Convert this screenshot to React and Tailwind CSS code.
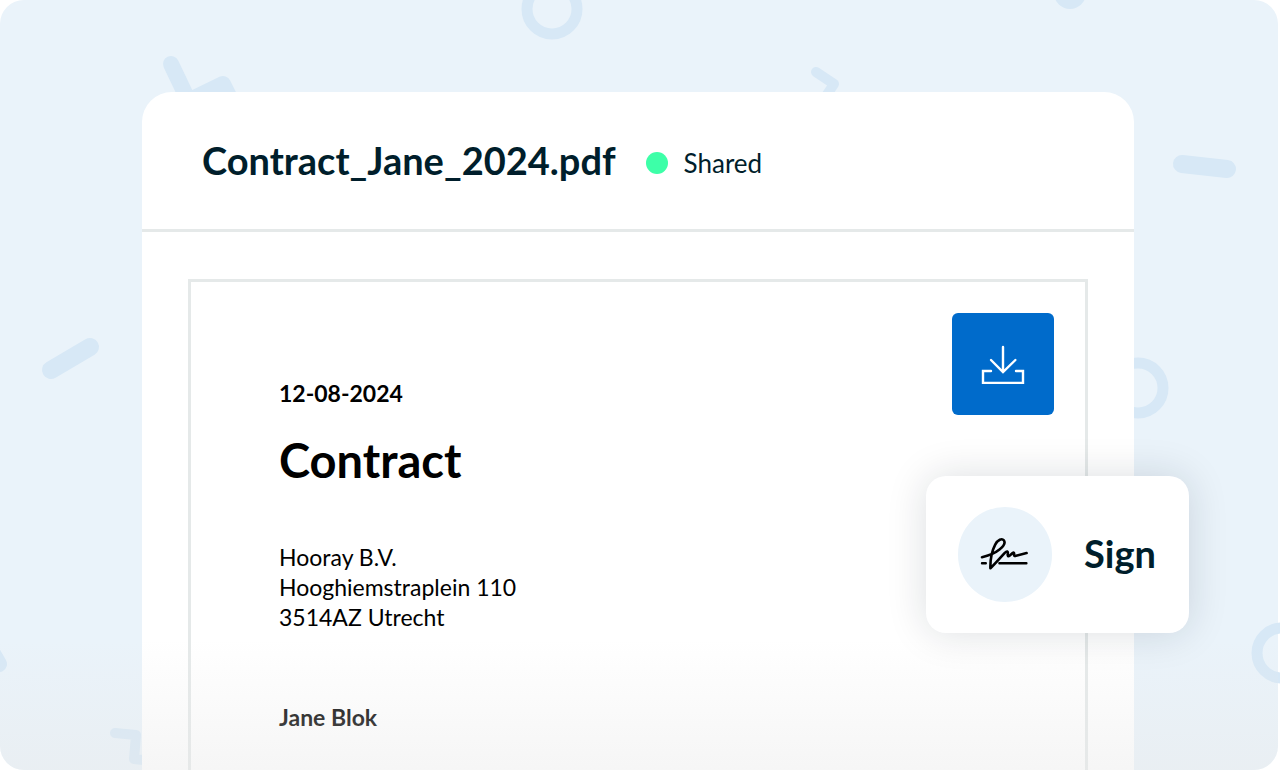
const SignatureIcon = () => (
    <svg width="50" height="36" viewBox="0 0 50 36" fill="none" stroke="black" strokeWidth="2.6" strokeLinecap="round" strokeLinejoin="round" aria-hidden="true">
        <path d="M2 20.2C8 19 14.5 16.6 19.5 12.6C23.5 9.3 25.5 5.5 23.8 3.3C22 1 17.8 2.6 15.2 7.6C12.4 13 10.2 23 10.4 31.2C14 28 19.6 21.5 24.8 15.8C27 13.6 28.2 14.4 27.8 16.6C27.4 19 28.2 19.8 29.8 18.4L32.6 16C33.8 15.2 34.4 16 34 17.4C33.8 19 34.6 19.2 36 18.8L46.6 16" />
        <path d="M2 26.2H5.8M19.4 26.2H46.4" strokeWidth="2.4" />
    </svg>
);

const DownloadIcon = () => (
    <svg width="44" height="40" viewBox="0 0 44 40" fill="none" stroke="white" strokeWidth="2.4" strokeLinecap="round" aria-hidden="true">
        <path d="M22 3V27M10 16L22 28L34.4 16" />
        <path d="M10 27H2V39H42V27H35" />
    </svg>
);

const Confetti = () => (
    <svg className="absolute inset-0 h-full w-full text-[#d7e8f6]" fill="none" stroke="currentColor" strokeLinecap="round" strokeLinejoin="round" aria-hidden="true">
        <circle cx="552" cy="9" r="25" strokeWidth="11" />
        <circle cx="1138" cy="388" r="25" strokeWidth="11" />
        <circle cx="1282" cy="653" r="25" strokeWidth="11" />
        <circle cx="1070" cy="-7" r="16" fill="currentColor" stroke="none" />
        <path d="M171 64L191 106" strokeWidth="16" />
        <path d="M186 102L223 84L237 112" strokeWidth="16" />
        <path d="M816 72L834 84L822 102" strokeWidth="10" />
        <path d="M1182 164L1227 169" strokeWidth="18" />
        <path d="M51 370L90 347" strokeWidth="18" />
        <path d="M-12 645L-1 664" strokeWidth="16" />
        <path d="M115 733L136 735L134 759L152 761" strokeWidth="10" />
    </svg>
);

const App = () => {
    return (
        <div className="min-h-screen bg-white font-[Lato,sans-serif]">
            <main className="relative flex min-h-screen flex-col overflow-hidden pt-[92px] pr-[146px] pl-[142px]">
                <div className="absolute inset-0 mr-[2px] rounded-3xl bg-[#eaf3fa]"></div>
                <Confetti />

                <section className="relative flex flex-1 flex-col rounded-t-[30px] bg-white">
                    <header className="flex h-[140px] items-center border-b-[3px] border-[#e5e9e9] px-[60px] text-[#001e2b]">
                        <h1 className="pb-0.5 text-[38px] leading-none font-bold whitespace-nowrap">Contract_Jane_2024.pdf</h1>
                        <div className="ml-[30px] flex items-center gap-4 pt-1">
                            <span className="h-[22px] w-[22px] shrink-0 rounded-full bg-[#3dffa8]"></span>
                            <span className="text-[26px] leading-none">Shared</span>
                        </div>
                    </header>

                    <article className="mx-[46px] mt-[47px] flex flex-1 items-start justify-between border-[3px] border-b-0 border-[#e5e9e9] pt-[31px] pr-[31px] pl-[88px] text-black">
                        <div className="pt-[65px] text-[23px] leading-[30px]">
                            <p className="font-bold">12-08-2024</p>
                            <h2 className="mt-5 text-[47px] leading-[64px] font-bold">Contract</h2>
                            <address className="mt-[50px] not-italic">
                                Hooray B.V.<br />
                                Hooghiemstraplein 110<br />
                                3514AZ Utrecht
                            </address>
                            <p className="mt-[70px] font-bold">Jane Blok</p>
                        </div>
                        <button type="button" aria-label="Download" className="flex h-[102px] w-[102px] shrink-0 items-center justify-center rounded-md bg-[#006bcb]">
                            <DownloadIcon />
                        </button>
                    </article>
                </section>

                <div className="pointer-events-none absolute inset-x-0 bottom-0 mr-[2px] h-[130px] rounded-b-3xl bg-linear-to-b from-[#e8e8e800] to-[#e8e8e866]"></div>

                <button type="button" className="absolute top-[476px] right-[91px] flex items-center gap-8 rounded-[20px] bg-white py-[31px] pr-[33px] pl-8 text-[#001e2b] shadow-[0_0_40px_rgba(0,30,43,0.14)]">
                    <span className="flex h-[95px] w-[94px] items-center justify-center rounded-full bg-[#eaf3fa]">
                        <SignatureIcon />
                    </span>
                    <span className="pb-1 text-[38px] leading-none font-bold">Sign</span>
                </button>
            </main>
        </div>
    );
};

export default App;
